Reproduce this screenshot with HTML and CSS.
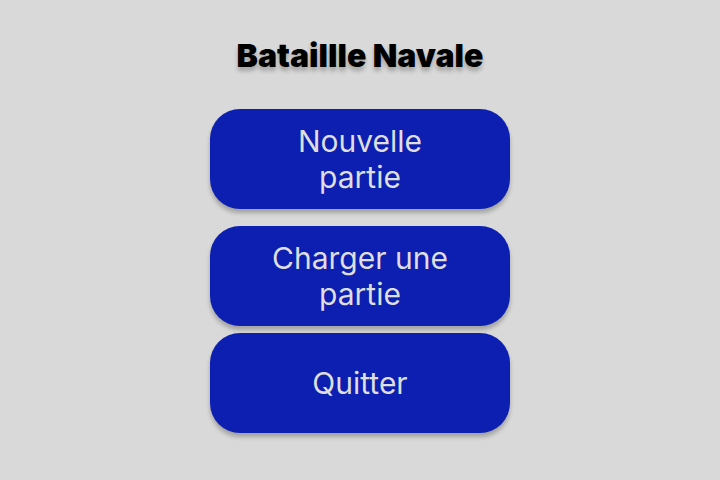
FILE: index.html
```html
<!DOCTYPE html>
<html lang="fr">
<head>
<meta charset="utf-8">
<title>Bataillle Navale</title>
<link rel="stylesheet" href="styles.css">
</head>
<body>
<main class="menu">
  <h1 class="title">Bataillle Navale</h1>
  <button class="btn btn-new">Nouvelle partie</button>
  <button class="btn btn-load">Charger une partie</button>
  <button class="btn btn-quit">Quitter</button>
</main>
</body>
</html>
```
FILE: styles.css
```css
html, body {
  margin: 0;
  padding: 0;
  background: #d9d9d9;
  width: 720px;
  height: 480px;
  overflow: hidden;
}
.menu {
  display: flex;
  flex-direction: column;
  align-items: center;
  padding-top: 36px;
  font-family: Inter, "Noto Sans", sans-serif;
}
.title {
  margin: 0 0 34px 0;
  font-size: 32px;
  font-weight: 900;
  line-height: 39px;
  color: #000;
  text-shadow: 0 4px 4px rgba(0, 0, 0, 0.25);
}
.btn {
  width: 300px;
  height: 100px;
  box-sizing: border-box;
  padding: 0 50px;
  border: none;
  border-radius: 30px;
  background: #0d1fb0;
  color: #dedede;
  font-family: Inter, "Noto Sans", sans-serif;
  font-size: 30px;
  font-weight: 400;
  line-height: 36px;
  text-align: center;
  box-shadow: 0 4px 4px rgba(0, 0, 0, 0.25);
}
.btn-new { margin-bottom: 17px; }
.btn-load { margin-bottom: 7px; }
```
